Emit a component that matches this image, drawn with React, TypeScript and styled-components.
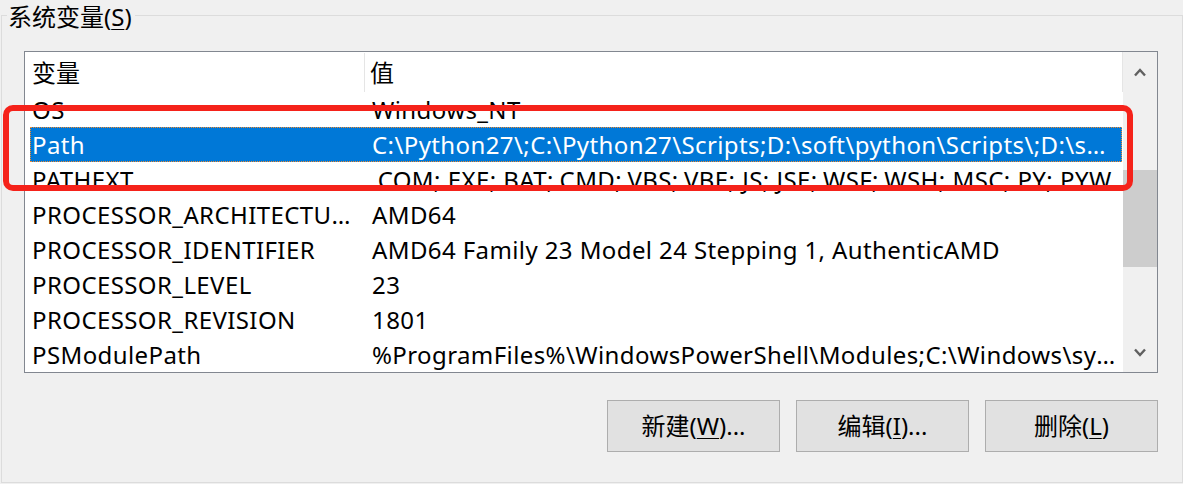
import React from "react";
import styled, { createGlobalStyle } from "styled-components";

const GlobalStyle = createGlobalStyle`
  html, body {
    margin: 0;
    padding: 0;
    background: #f0f0f0;
  }
  body {
    font-family: "Noto Sans", "Noto Sans CJK SC", sans-serif;
    color: #000;
    -webkit-font-smoothing: antialiased;
  }
`;

const Page = styled.div`
  position: relative;
  width: 1183px;
  height: 484px;
  overflow: hidden;
  background: #f0f0f0;
`;

const Group = styled.fieldset`
  box-sizing: border-box;
  margin: 0 0 0 1px;
  width: 1182px;
  height: 483px;
  border: 1px solid #dcdcdc;
  padding: 0 24px 0 22px;
  min-width: 0;
`;

const Legend = styled.legend`
  margin-left: -17px;
  padding: 5px 3px 1px 1px;
  font-size: 24px;
  line-height: 24px;
  color: #000;
`;

const Key = styled.span`
  text-decoration: underline;
  text-underline-offset: 3px;
  text-decoration-thickness: 1px;
`;

const ListBox = styled.div`
  box-sizing: border-box;
  margin-top: 21px;
  height: 322px;
  border: 1px solid #828790;
  background: #fff;
  display: grid;
  grid-template-columns: 1fr 34px;
`;

const ListArea = styled.div`
  display: flex;
  flex-direction: column;
  padding: 0 1px 0 5px;
  overflow: hidden;
  min-width: 0;
  letter-spacing: 0.4px;
`;

const HeaderRow = styled.div`
  display: grid;
  grid-template-columns: 335px 1fr;
  height: 40px;
  border-right: 1px solid #e5e5e5;
  margin-right: -1px;
  font-size: 24px;
`;

const HeaderCell = styled.div<{ $divider?: boolean; $pad: number }>`
  display: flex;
  align-items: center;
  padding-left: ${(p) => p.$pad}px;
  border-right: ${(p) => (p.$divider ? "1px solid #e5e5e5" : "none")};
  margin-top: 1px;
  line-height: 30px;
  letter-spacing: 0;
`;

const Row = styled.div<{ $selected?: boolean }>`
  box-sizing: border-box;
  display: grid;
  grid-template-columns: 335px 1fr;
  height: 35px;
  font-size: 24px;
  line-height: 33px;
  background: ${(p) => (p.$selected ? "#0078d7" : "transparent")};
  color: ${(p) => (p.$selected ? "#fff" : "#000")};
  border: 1px ${(p) => (p.$selected ? "dotted #f38b2e" : "solid transparent")};
`;

const Cell = styled.div<{ $pad: number; $padRight: number }>`
  padding-left: ${(p) => p.$pad}px;
  padding-right: ${(p) => p.$padRight}px;
  white-space: nowrap;
  overflow: hidden;
  text-overflow: ellipsis;
  min-width: 0;
`;

const ScrollBar = styled.div`
  display: flex;
  flex-direction: column;
  background: #f0f0f0;
`;

const ArrowButton = styled.div`
  height: 40px;
  display: flex;
  align-items: center;
  justify-content: center;
  flex: none;
`;

const Track = styled.div`
  flex: 1;
  display: flex;
  flex-direction: column;
`;

const Thumb = styled.div<{ $offset: number; $size: number }>`
  margin-top: ${(p) => p.$offset}px;
  height: ${(p) => p.$size}px;
  background: #cdcdcd;
`;

const ButtonRow = styled.div`
  display: flex;
  justify-content: flex-end;
  gap: 16px;
  margin-top: 27px;
`;

const Button = styled.button`
  box-sizing: border-box;
  width: 173px;
  height: 52px;
  background: #e1e1e1;
  border: 1px solid #adadad;
  font-family: inherit;
  font-size: 24px;
  line-height: 30px;
  color: #000;
  padding: 0;
`;

const Highlight = styled.div`
  position: absolute;
  left: 3px;
  top: 105px;
  width: 1130px;
  height: 86px;
  box-sizing: border-box;
  border: 6px solid #f5221a;
  border-radius: 10px;
  pointer-events: none;
`;

const Chevron = ({ up }: { up?: boolean }) => (
  <svg width="12" height="9" viewBox="0 0 12 9">
    <path
      d={up ? "M1 7.5 L6 2 L11 7.5" : "M1 1.5 L6 7 L11 1.5"}
      fill="none"
      stroke="#606060"
      strokeWidth="2.4"
    />
  </svg>
);

const rows: [string, string][] = [
  ["OS", "Windows_NT"],
  [
    "Path",
    "C:\\Python27\\;C:\\Python27\\Scripts;D:\\soft\\python\\Scripts\\;D:\\soft\\python\\;C:\\Windows\\system32",
  ],
  ["PATHEXT", ".COM;.EXE;.BAT;.CMD;.VBS;.VBE;.JS;.JSE;.WSF;.WSH;.MSC;.PY;.PYW"],
  ["PROCESSOR_ARCHITECTURE", "AMD64"],
  ["PROCESSOR_IDENTIFIER", "AMD64 Family 23 Model 24 Stepping 1, AuthenticAMD"],
  ["PROCESSOR_LEVEL", "23"],
  ["PROCESSOR_REVISION", "1801"],
  [
    "PSModulePath",
    "%ProgramFiles%\\WindowsPowerShell\\Modules;C:\\Windows\\system32\\WindowsPowerShell\\v1.0\\Modules",
  ],
];

export default function App() {
  return (
    <Page>
      <GlobalStyle />
      <Group>
        <Legend>
          系统变量(<Key>S</Key>)
        </Legend>
        <ListBox>
          <ListArea>
            <HeaderRow>
              <HeaderCell $divider $pad={2}>变量</HeaderCell>
              <HeaderCell $pad={5}>值</HeaderCell>
            </HeaderRow>
            {rows.map(([name, value]) => (
              <Row key={name} $selected={name === "Path"}>
                <Cell $pad={1} $padRight={10}>{name}</Cell>
                <Cell $pad={6} $padRight={3}>{value}</Cell>
              </Row>
            ))}
          </ListArea>
          <ScrollBar>
            <ArrowButton>
              <Chevron up />
            </ArrowButton>
            <Track>
              <Thumb $offset={78} $size={97} />
            </Track>
            <ArrowButton>
              <Chevron />
            </ArrowButton>
          </ScrollBar>
        </ListBox>
        <ButtonRow>
          <Button>
            新建(<Key>W</Key>)...
          </Button>
          <Button>
            编辑(<Key>I</Key>)...
          </Button>
          <Button>
            删除(<Key>L</Key>)
          </Button>
        </ButtonRow>
      </Group>
      <Highlight />
    </Page>
  );
}
